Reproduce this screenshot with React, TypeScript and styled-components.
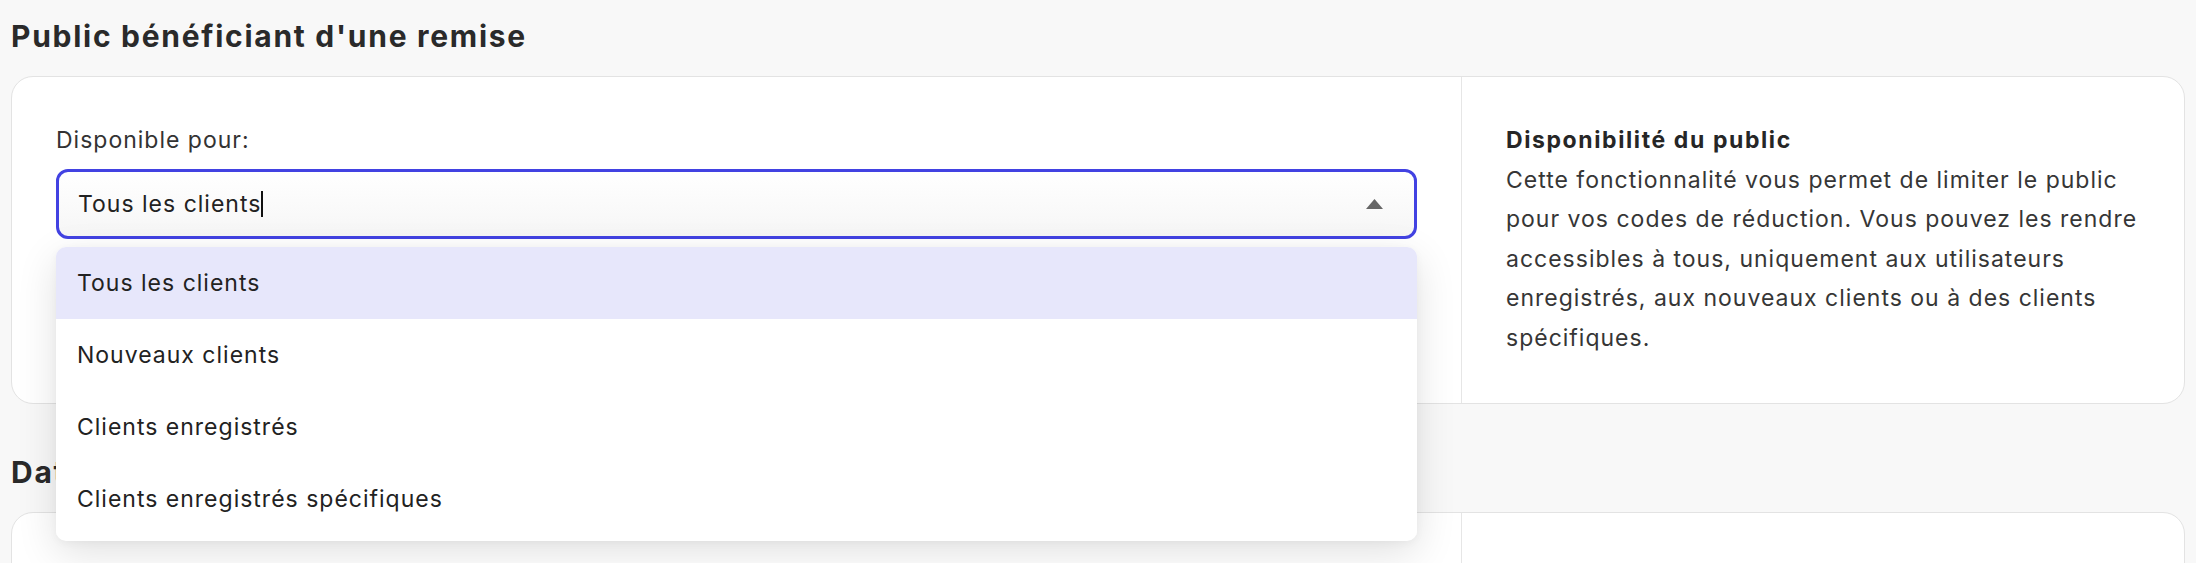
import styled, { createGlobalStyle } from 'styled-components'

const GlobalStyle = createGlobalStyle`
	html, body {
		margin: 0;
		background: #f8f8f8;
	}
	body {
		font-family: Inter, 'Noto Sans', sans-serif;
		color: #2b2b2b;
	}
`

const Page = styled.div`
	padding: 18px 11px 40px;
	display: flex;
	flex-direction: column;
	gap: 50px;
`

const Section = styled.section`
	display: flex;
	flex-direction: column;
	gap: 22px;
`

const SectionTitle = styled.h2`
	margin: 0;
	font-size: 30px;
	font-weight: 700;
	line-height: 36px;
	letter-spacing: 1.72px;
	color: #2a2a2a;
`

const Card = styled.div`
	display: grid;
	grid-template-columns: 1fr 723px;
	background: #fff;
	border: 1px solid #e3e3e3;
	border-radius: 22px;
`

const Main = styled.div`
	padding: 44px;
	position: relative;
`

const Aside = styled.div`
	padding: 44px 24px 44px 44px;
	border-left: 1px solid #e6e6e6;
	font-size: 23px;
	line-height: 39.6px;
	letter-spacing: 1px;
	color: #363636;
`

const AsideTitle = styled.div`
	font-weight: 700;
	letter-spacing: 1.6px;
	color: #262626;
`

const Label = styled.div`
	font-size: 23px;
	line-height: 39.6px;
	letter-spacing: 1px;
	color: #333;
	margin-bottom: 8px;
`

const Field = styled.div`
	position: relative;
`

const SelectBox = styled.div`
	box-sizing: border-box;
	height: 70px;
	display: flex;
	align-items: center;
	justify-content: space-between;
	padding: 0 31px 0 19px;
	border: 3px solid #4242e2;
	border-radius: 12px;
	background: linear-gradient(#ffffff, #f6f6f6);
	font-size: 23px;
	letter-spacing: 1px;
	color: #222;
`

const Value = styled.span`
	display: flex;
	align-items: center;
`

const TextCaret = styled.span`
	display: inline-block;
	width: 1.5px;
	height: 26px;
	background: #111;
`

const Menu = styled.div`
	position: absolute;
	top: calc(100% + 8px);
	left: 0;
	right: 0;
	z-index: 10;
	padding-bottom: 6px;
	background: #fff;
	border-radius: 10px;
	overflow: hidden;
	box-shadow: 0 12px 40px rgba(0, 0, 0, 0.12), 0 2px 8px rgba(0, 0, 0, 0.04);
`

const Option = styled.div<{ $active?: boolean }>`
	height: 72px;
	display: flex;
	align-items: center;
	padding-left: 21px;
	font-size: 23px;
	letter-spacing: 1px;
	color: #222;
	background: ${(p) => (p.$active ? '#e7e7fb' : '#fff')};
`

const FieldGrid = styled.div`
	display: grid;
	grid-template-columns: 1fr 1fr;
	gap: 24px;
`

const options = [
	'Tous les clients',
	'Nouveaux clients',
	'Clients enregistrés',
	'Clients enregistrés spécifiques',
]

export default function App() {
	return (
		<>
			<GlobalStyle />
			<Page>
				<Section>
					<SectionTitle>Public bénéficiant d'une remise</SectionTitle>
					<Card>
						<Main>
							<Label>Disponible pour:</Label>
							<Field>
								<SelectBox>
									<Value>
										Tous les clients
										<TextCaret />
									</Value>
									<svg width="17" height="10" viewBox="0 0 17 10">
										<polygon points="8.5,0 17,10 0,10" fill="#666" />
									</svg>
								</SelectBox>
								<Menu>
									{options.map((o, i) => (
										<Option key={o} $active={i === 0}>
											{o}
										</Option>
									))}
								</Menu>
							</Field>
						</Main>
						<Aside>
							<AsideTitle>Disponibilité du public</AsideTitle>
							Cette fonctionnalité vous permet de limiter le public pour vos codes de
							réduction. Vous pouvez les rendre accessibles à tous, uniquement aux
							utilisateurs enregistrés, aux nouveaux clients ou à des clients
							spécifiques.
						</Aside>
					</Card>
				</Section>
				<Section>
					<SectionTitle>Dates de validité</SectionTitle>
					<Card>
						<Main>
							<FieldGrid>
								<Label>Date de début</Label>
								<Label>Date de fin</Label>
							</FieldGrid>
						</Main>
						<Aside>
							<AsideTitle>Période de validité</AsideTitle>
							Définissez la période pendant laquelle le code de réduction peut être
							utilisé.
						</Aside>
					</Card>
				</Section>
			</Page>
		</>
	)
}
